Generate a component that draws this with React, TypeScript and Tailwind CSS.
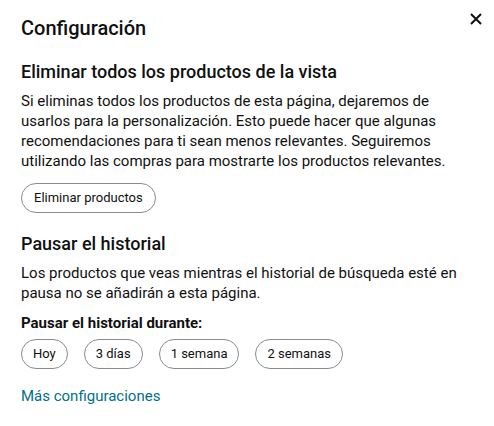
import React from 'react';

const App = () => {
  const durations = ['Hoy', '3 días', '1 semana', '2 semanas'];

  return (
    <div className="w-[494px] h-[426px] bg-white text-[#0f1111] font-['Roboto',sans-serif] rounded-tr-lg overflow-hidden">
      <div className="flex items-start justify-between pl-[21px] pr-[10px] pt-[14px]">
        <h1 className="text-[20px] leading-[28px] font-medium">Configuración</h1>
        <button className="w-[14px] h-[14px] mt-[-2px] mr-[1px] flex items-center justify-center">
          <svg width="12" height="12" viewBox="0 0 12 12">
            <path d="M1 1L11 11M11 1L1 11" stroke="#0f1111" strokeWidth="2" />
          </svg>
        </button>
      </div>

      <div className="px-[21px]">
        <h2 className="mt-[18px] text-[18px] leading-[24px] font-medium">
          Eliminar todos los productos de la vista
        </h2>
        <p className="mt-[7px] text-[15px] leading-[20px] w-[452px]">
          Si eliminas todos los productos de esta página, dejaremos de usarlos para la personalización. Esto puede hacer que algunas recomendaciones para ti sean menos relevantes. Seguiremos utilizando las compras para mostrarte los productos relevantes.
        </p>
        <button className="mt-[12px] h-[30px] px-[12px] rounded-full border border-[#888c8c] text-[13px]">
          Eliminar productos
        </button>

        <h2 className="mt-[19px] text-[18px] leading-[24px] font-medium">Pausar el historial</h2>
        <p className="mt-[7px] text-[15px] leading-[20px] w-[452px]">
          Los productos que veas mientras el historial de búsqueda esté en pausa no se añadirán a esta página.
        </p>
        <p className="mt-[10px] text-[15px] leading-[20px] font-bold">Pausar el historial durante:</p>
        <div className="mt-[6px] flex gap-[16px]">
          {durations.map((d) => (
            <button
              key={d}
              className="h-[30px] px-[11px] rounded-full border border-[#888c8c] text-[13px]"
            >
              {d}
            </button>
          ))}
        </div>
        <a className="block mt-[17px] text-[15px] leading-[20px] text-[#007185]" href="#">
          Más configuraciones
        </a>
      </div>
    </div>
  );
};

export default App;
